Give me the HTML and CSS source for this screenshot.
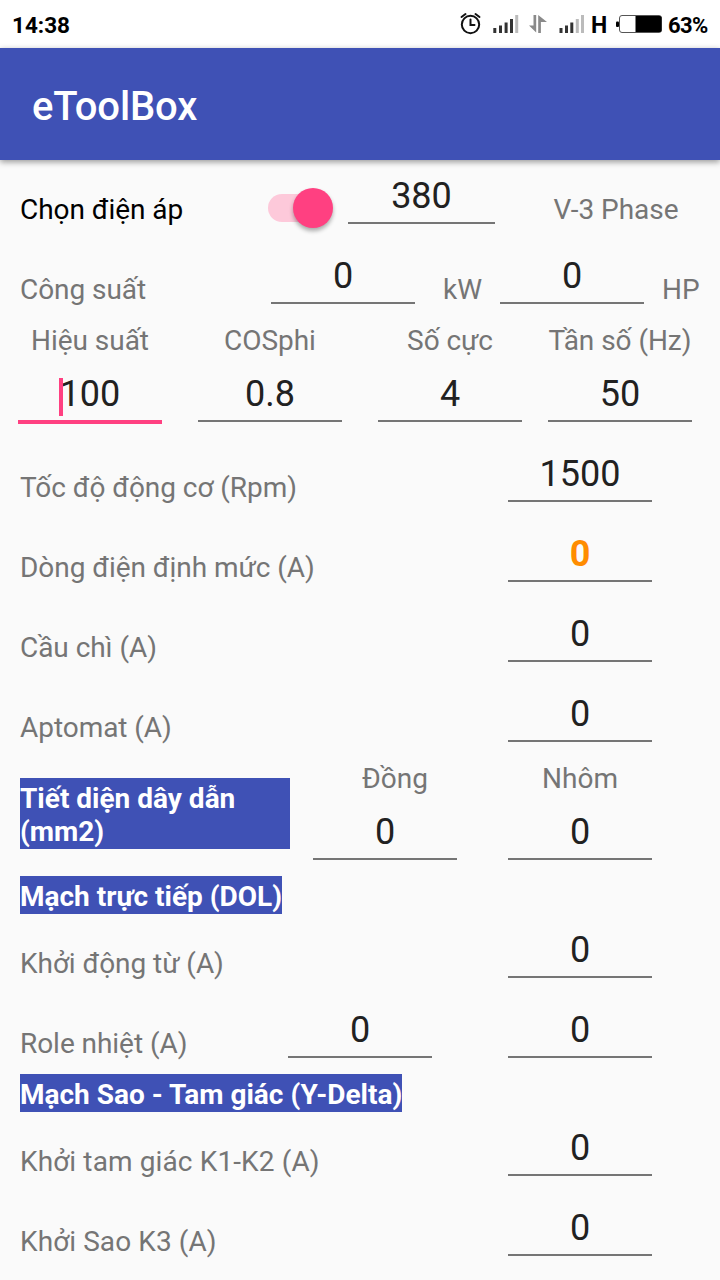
FILE: index.html
```html
<!DOCTYPE html>
<html lang="vi">
<head>
<meta charset="utf-8">
<title>eToolBox</title>
<link rel="stylesheet" href="styles.css">
</head>
<body>
<header class="status">
  <span class="clock">14:38</span>
  <svg class="status-icons" width="206" height="48" viewBox="0 0 206 48">
    <g fill="none" stroke="#111" stroke-width="2" stroke-linecap="round">
      <circle cx="10.500" cy="24.500" r="8.700"/>
      <path d="M10.500 19.500v5.500h4M1.500 17l4-3M19.500 17l-4-3"/>
    </g>
    <g fill="#333">
      <path d="M33.300 28h3v5h-3zM39 25.500h3V33h-3zM44.600 22.500h3V33h-3zM50 19h3v14h-3z"/>
      <path fill="#bbb" d="M55.200 15h3v18h-3z"/>
      <path d="M99.500 28h3v5h-3zM105 25.500h3V33h-3zM110.300 22.500h3V33h-3z"/>
      <path fill="#bbb" d="M115.800 19h3v14h-3zM121 15h3v18h-3z"/>
    </g>
    <g fill="#8a8a8a">
      <path d="M73.500 15h2.700v17.500L69 25.500h4.500z"/>
      <path d="M78.200 33h2.700V22H87L78.200 15z"/>
    </g>
    <rect x="159.500" y="15.500" width="42" height="17" rx="2.500" fill="#fff" stroke="#555"/>
    <path d="M175.500 16H200q1.500 0 1.500 1.500v13q0 1.500-1.500 1.500h-24.500z"/>
    <rect x="156" y="21.500" width="3" height="5.500" rx="1"/>
  </svg>
  <span class="network">H</span>
  <span class="battery">63%</span>
</header>
<div class="appbar">eToolBox</div>
<main>
  <div class="row voltage">
    <div class="label strong">Chọn điện áp</div>
    <div class="switch"><span class="thumb"></span></div>
    <div class="field">380</div>
    <div class="label center">V-3 Phase</div>
  </div>
  <div class="row power">
    <div class="label">Công suất</div>
    <div class="field">0</div>
    <div class="label unit">kW</div>
    <div class="field">0</div>
    <div class="label unit last">HP</div>
  </div>
  <div class="quad captions">
    <div>Hiệu suất</div><div>COSphi</div><div>Số cực</div><div>Tần số (Hz)</div>
  </div>
  <div class="quad">
    <div class="field focused"><span class="caret"></span>100</div>
    <div class="field">0.8</div>
    <div class="field">4</div>
    <div class="field">50</div>
  </div>
  <div class="row single"><div class="label">Tốc độ động cơ (Rpm)</div><div class="field">1500</div></div>
  <div class="row single"><div class="label">Dòng điện định mức (A)</div><div class="field rated">0</div></div>
  <div class="row single"><div class="label">Cầu chì (A)</div><div class="field">0</div></div>
  <div class="row single"><div class="label">Aptomat (A)</div><div class="field">0</div></div>
  <div class="wire">
    <div class="heading">Tiết diện dây dẫn (mm2)</div>
    <div class="metal copper"><div class="caption">Đồng</div><div class="field">0</div></div>
    <div class="metal"><div class="caption">Nhôm</div><div class="field">0</div></div>
  </div>
  <h2 class="heading section">Mạch trực tiếp (DOL)</h2>
  <div class="row single"><div class="label">Khởi động từ (A)</div><div class="field">0</div></div>
  <div class="row relay"><div class="label">Role nhiệt (A)</div><div class="field">0</div><div class="field">0</div></div>
  <h2 class="heading section">Mạch Sao - Tam giác (Y-Delta)</h2>
  <div class="row single"><div class="label delta">Khởi tam giác K1-K2 (A)</div><div class="field">0</div></div>
  <div class="row single"><div class="label star">Khởi Sao K3 (A)</div><div class="field">0</div></div>
</main>
</body>
</html>
```
FILE: styles.css
```css
* { box-sizing: border-box; }

body {
  margin: 0;
  width: 720px;
  height: 1280px;
  overflow: hidden;
  background: #fafafa;
  color: #757575;
  font: 28px/38px Roboto, sans-serif;
}

.status {
  display: grid;
  grid-template-columns: 448px 206px 1fr;
  height: 48px;
  padding-left: 12px;
  background: #fff;
  color: #000;
  font-size: 22px;
  font-weight: 700;
  line-height: 51px;
}
.clock { font-size: 22.5px; }
.status-icons { grid-column: 2; grid-row: 1; }
.network { grid-column: 2; grid-row: 1; padding-left: 131px; font-size: 23px; }
.battery { grid-column: 3; padding-left: 2px; letter-spacing: -.6px; }

.appbar {
  position: relative;
  height: 112px;
  padding-left: 32px;
  background: #3f51b5;
  box-shadow: 0 2px 6px rgba(0, 0, 0, .4);
  color: #fff;
  font-size: 40px;
  font-weight: 500;
  letter-spacing: -.15px;
  line-height: 118px;
}

main { display: flex; flex-direction: column; }

.row { display: grid; height: 80px; padding-left: 20px; }
.label { padding-top: 31px; letter-spacing: -.05px; white-space: nowrap; }
.delta { letter-spacing: .12px; }
.star { letter-spacing: .08px; }
.strong { color: #000; }
.center { text-align: center; }

.field {
  width: 144px;
  height: 49px;
  margin-top: 15px;
  border-bottom: 2px solid #757575;
  color: #212121;
  font-size: 36px;
  line-height: 42px;
  text-align: center;
}
.focused {
  position: relative;
  height: 51px;
  border-bottom: 4px solid #ff4081;
}
.caret {
  position: absolute;
  left: 41px;
  top: 5px;
  width: 4px;
  height: 38px;
  background: #ff4081;
}
.rated { color: #ff8c00; font-weight: 700; }

.voltage { grid-template-columns: 248px 80px 147px 1fr; }
.voltage .field { width: 147px; }
.voltage .center { margin-left: 37px; margin-right: 20px; }
.switch {
  display: flex;
  justify-content: flex-end;
  align-items: center;
  width: 64px;
  height: 28px;
  margin-top: 34px;
  border-radius: 14px;
  background: #fdc9da;
}
.thumb {
  flex: none;
  width: 40px;
  height: 40px;
  margin-right: -1px;
  border-radius: 50%;
  background: #ff4081;
  box-shadow: 0 3px 4px rgba(0, 0, 0, .32);
}

.power { grid-template-columns: 251px 144px 85px 144px 1fr; }
.unit { padding-left: 28px; }
.unit.last { padding-left: 18px; }

.quad {
  display: grid;
  grid-template-columns: 180px 180px 180px 160px;
  justify-items: center;
  height: 80px;
}
.captions { height: 38px; letter-spacing: -.05px; line-height: 42px; }

.single { grid-template-columns: 488px 144px; }
.relay { grid-template-columns: 268px 220px 144px; }

.wire {
  display: grid;
  grid-template-columns: 270px 195px 190px;
  height: 118px;
  padding-left: 20px;
}
.metal { display: flex; flex-direction: column; align-items: center; }
.metal.copper { padding-right: 5px; }
.metal.copper .caption { padding-left: 20px; }
.caption { height: 38px; line-height: 42px; }

.heading {
  margin: 0;
  background: #3f51b5;
  color: #fff;
  font-size: 28px;
  font-weight: 700;
  line-height: 33px;
}
.wire .heading { height: 71px; margin-top: 20px; padding-top: 4px; }
.section { align-self: flex-start; height: 38px; margin-left: 20px; padding-top: 4px; }
```
